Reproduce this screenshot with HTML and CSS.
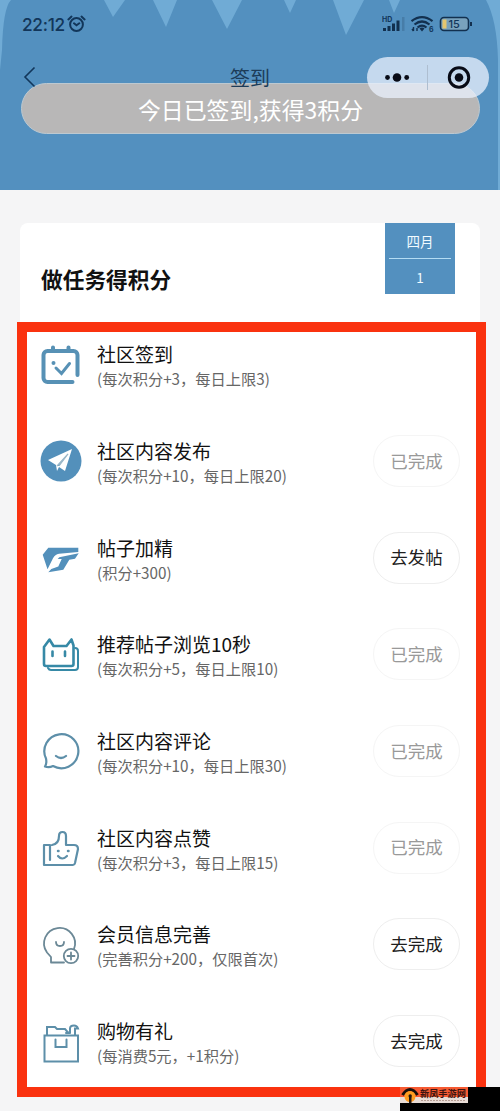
FILE: index.html
```html
<!DOCTYPE html>
<html lang="zh-CN">
<head>
<meta charset="utf-8">
<title>签到</title>
<link rel="stylesheet" href="styles.css">
</head>
<body>
<div class="page">
  <header class="hero">
    <svg class="rays" viewBox="0 0 500 190"><path d="M0 0H11Q3 8 2 50L0 70zM104 0h21l-12 17zM153 0h24l-11 27zM212 0h30l-15 29zM284 0h12l-6 13zM333 0h31l-18 35zM389 0h11l-6 13zM486 0h14v190h-2V60Q497 20 486 0z"/></svg>
    <div class="status">
      <span class="time">22:12</span>
      <svg class="alarm" width="20" height="18" viewBox="0 0 20 18"><circle cx="9.5" cy="9.5" r="6.4"/><path d="M1.4 4.4 4.5 1.6M17.6 4.4 14.5 1.6M7 8.3l2.5 2 2.8-2"/></svg>
      <svg class="signals" width="94" height="20" viewBox="0 0 94 20">
        <text x="0" y="8" class="hd">HD</text>
        <path class="fill" d="M1 14h3v3H1zM5.5 12h3v5h-3zM10 9.5h3V17h-3zM14.5 6.5h3V17h-3z"/><path class="dim" d="M20 3h2.5v14H20z"/>
        <path class="wave" d="M29.5 7.2q10.5-8 21 0M32.5 10.5q7.5-6 15 0M35.500 13.5q4.500-3.600 9 0"/><path class="fill" d="m37.500 14.500 2.500 3 2.500-3q-2.500-2-5 0z"/>
        <path class="mini" d="M31.500 13v4m0 0-1.500-2M35 17v-3"/><text x="47" y="18" class="six">6</text>
        <rect class="cell" x="58.500" y="3.500" width="28" height="13" rx="3.500"/><path class="yellow" d="M60.500 5.500h4v9h-4z"/><path class="fill" d="M88 8h2v4h-2z"/><text x="66.500" y="14.200" class="pct">15</text>
      </svg>
    </div>
    <div class="banner">今日已签到,获得3积分</div>
    <nav class="nav">
      <svg class="back" width="14" height="22" viewBox="0 0 14 22"><path d="M11.500 1.500 2 11l9.500 9.500"/></svg>
      <span class="title">签到</span>
    </nav>
    <div class="capsule">
      <svg width="122" height="41" viewBox="0 0 122 41"><circle cx="20.500" cy="20.500" r="2.400"/><circle cx="30" cy="20.500" r="4.300"/><circle cx="39.700" cy="20.500" r="2.400"/><path class="split" d="M60.500 8v25"/><circle class="ring" cx="92" cy="20.500" r="9.700"/><circle cx="92" cy="20.500" r="4.300"/></svg>
    </div>
  </header>

  <main class="card">
    <div class="card-head">
      <h1>做任务得积分</h1>
      <div class="date"><span>四月</span><span class="day">1</span></div>
    </div>
    <ul class="tasks">
      <li class="task">
        <svg class="icon checkin" viewBox="0 0 44 44"><path d="M38.500 32V12a4 4 0 0 0-4-4H8.500a4 4 0 0 0-4 4v23a4 4 0 0 0 4 4h25M14 4.500V8M29.500 4.500V8"/><path class="check" d="m17 25 5.500 5.500 8-10"/><circle cx="14.500" cy="20" r="2"/></svg>
        <div class="info"><h2>社区签到</h2><p>(每次积分+3，每日上限3)</p></div>
      </li>
      <li class="task">
        <svg class="icon solid" viewBox="0 0 44 44"><circle cx="22" cy="21" r="20.500"/><path class="white" d="m9 20 24-11-7 22-6-4-2 4-1-6z"/><path class="fold" d="m18 26 11-12-9 12"/></svg>
        <div class="info"><h2>社区内容发布</h2><p>(每次积分+10，每日上限20)</p></div>
        <button class="btn done">已完成</button>
      </li>
      <li class="task">
        <svg class="icon solid" viewBox="0 0 44 44"><path d="M3.700 17.800 9.300 10.800H39.300V15L20 16.800q-4 .5-6 4.500L8.500 32.200z"/><path d="m20.300 20.200 19.400-4-3.700 5.600-5.700 1-6 10L9.300 35.200l3-3.200 7-2.500 3.400-7.500h-4z"/></svg>
        <div class="info"><h2>帖子加精</h2><p>(积分+300)</p></div>
        <button class="btn">去发帖</button>
      </li>
      <li class="task">
        <svg class="icon cat" viewBox="0 0 44 44"><path d="M5 31V14l5.500-7.500 4 6.500h13l5-6.500 2 6v18.500q0 2-2 2H7q-2 0-2-2zM13.500 18.500v4.500M26 18.500v4.500"/><path class="behind" d="M36 15q3 0 3 3v16q0 3-3 3H12q-2 0-3-2"/></svg>
        <div class="info"><h2>推荐帖子浏览10秒</h2><p>(每次积分+5，每日上限10)</p></div>
        <button class="btn done">已完成</button>
      </li>
      <li class="task">
        <svg class="icon line" viewBox="0 0 44 44"><path d="M7 28.500A17 17 0 1 1 14 36q-4 2-8 .5 2-3 1-8zM17 26q5 4 10 0"/></svg>
        <div class="info"><h2>社区内容评论</h2><p>(每次积分+10，每日上限30)</p></div>
        <button class="btn done">已完成</button>
      </li>
      <li class="task">
        <svg class="icon line thumb" viewBox="0 0 44 44"><path d="M11 33V18H5v20h29q1.500 0 2-2l3-14q0-4-4-4h-8V9q0-4-3.500-4T20 9q0 8-7 9M19 29q4 5 9 0"/><path class="eyes" d="M19 24h.5M29 24h.5"/></svg>
        <div class="info"><h2>社区内容点赞</h2><p>(每次积分+3，每日上限15)</p></div>
        <button class="btn done">已完成</button>
      </li>
      <li class="task">
        <svg class="icon line thin" viewBox="0 0 44 44"><path d="M25 39.500H12V34L8 29.500A15.500 15.500 0 1 1 35 26M17 19q0 4 4 4t4-4"/><circle cx="32" cy="33" r="7.200"/><path d="M28.500 33h7M32 29.500v7"/></svg>
        <div class="info"><h2>会员信息完善</h2><p>(完善积分+200，仅限首次)</p></div>
        <button class="btn">去完成</button>
      </li>
      <li class="task">
        <svg class="icon line box" viewBox="0 0 44 44"><path d="M5.500 15.500H39V41.500H5.500zM16.500 19.500V27h11v-7.500M8 14.500V7h8l2 2h8l3 3.500h2V8.500q0-3 4-3 3 0 4 3h-3v6M27 13h4"/></svg>
        <div class="info"><h2>购物有礼</h2><p>(每消费5元，+1积分)</p></div>
        <button class="btn">去完成</button>
      </li>
    </ul>
  </main>
  <div class="frame"></div>
  <div class="watermark">
    <svg width="100" height="24" viewBox="0 0 100 24"><path class="strip" d="M0 0h68v16H0z"/><path class="red" d="M0 0h68v10H0z"/><path class="arc" d="M2.500 8Q10-3 17.500 8"/><circle class="sun" cx="10" cy="9.500" r="5.500"/><path class="person" d="M9 10h2.500v6H9z"/><circle class="person" cx="10.200" cy="9" r="1.700"/><text x="20" y="10">新凤手游网</text><path class="caption" d="M21 13.500h44"/></svg>
  </div>
</div>
</body>
</html>
```
FILE: styles.css
```css
* { box-sizing: border-box; }
body { margin: 0; background: #f5f5f6; font-family: "Noto Sans CJK SC", sans-serif; color: #111; }
.page { position: relative; height: 1111px; overflow: hidden; }
svg { display: block; fill: none; }

.hero { position: relative; height: 190px; padding: 14px 20px 0; background: #5390bf; }
.rays { position: absolute; inset: 0; width: 500px; height: 190px; fill: #70abd5; }
.status { position: relative; display: flex; align-items: center; height: 20px; color: #12365a; }
.time { margin-left: 2px; width: 45px; font: 500 17.300px/21px Inter, sans-serif; letter-spacing: -.3px; white-space: nowrap; }
.alarm { stroke: #12365a; stroke-width: 2; stroke-linecap: round; }
.signals { margin-left: auto; margin-right: 4px; }
.signals text { fill: #12365a; font: 700 7px Inter, sans-serif; }
.signals .pct { font-size: 11px; font-weight: 500; }
.fill { fill: #12304f; }
.dim { fill: #477da8; }
.wave { stroke: #12304f; stroke-width: 2.2; }
.mini { stroke: #12304f; stroke-width: 1.4; }
.cell { stroke: #12304f; stroke-width: 1.6; fill: #79a2bd; }
.yellow { fill: #e5c66f; }
.banner { position: relative; margin: 49px 0 0 1px; height: 51px; border: 1px solid #bdc9d1; border-radius: 26px; background: #b8b7b7; color: #fff; font-size: 22.900px; line-height: 51px; text-align: center; }
.nav { position: absolute; top: 65px; left: 0; width: 500px; height: 26px; display: flex; justify-content: center; }
.back { position: absolute; left: 23px; top: 1px; stroke: #12365a; stroke-width: 1.6; }
.title { color: #1c3c59; font-size: 20px; line-height: 26px; }
.capsule { position: absolute; left: 367px; top: 57px; width: 122px; height: 41px; border-radius: 21px; background: rgba(235, 242, 253, .75); }
.capsule svg { fill: #080b16; }
.capsule .split { stroke: #aebed0; }
.capsule .ring { fill: none; stroke: #080b16; stroke-width: 3; }

.card { margin: 33px 20px 0; height: 870px; border-radius: 8px; background: #fff; }
.card-head { display: flex; justify-content: space-between; height: 94px; padding: 0 25px 0 21px; }
h1 { margin: 40px 0 0; font-size: 21.7px; line-height: 32px; font-weight: 700; }
.date { width: 70px; height: 71px; padding: 0 4px; background: #5390bf; color: #f1fbff; font-size: 13.500px; text-align: center; }
.date span { display: block; height: 36px; line-height: 37px; border-bottom: 1.500px solid #b4dcf3; }
.date .day { border: 0; height: 35px; line-height: 36px; }
.tasks { list-style: none; margin: 0; padding: 0 20px 0 19px; }
.task { display: flex; align-items: center; height: 96.7px; }
.icon { width: 44px; height: 44px; flex: none; }
.info { margin-left: 14px; padding-top: 2px; flex: 1; white-space: nowrap; }
h2 { margin: 0; font-size: 19px; line-height: 25px; font-weight: 400; }
.info p { margin: 0; color: #666; font-size: 15.250px; line-height: 25px; }
.btn { width: 87px; height: 52px; margin-bottom: 2px; padding: 0 0 2px; border: 1px solid #eee; border-radius: 26px; background: #fff; color: #202020; font: 17.500px "Noto Sans CJK SC", sans-serif; }
.done { color: #999; border-color: #f5f5f5; }

.checkin { stroke: #5791b5; stroke-width: 4; stroke-linecap: round; }
.checkin circle { fill: #5791b5; stroke: none; }
.check { stroke-width: 3; }
.solid { fill: #5390bb; }
.white { fill: #fff; }
.fold { stroke: #9bb8c9; stroke-width: 1.200; }
.cat { stroke: #3689a6; stroke-width: 2.600; stroke-linejoin: round; stroke-linecap: round; }
.behind { stroke-width: 2; }
.line { stroke: #5d8fa9; stroke-width: 2.200; stroke-linejoin: round; stroke-linecap: round; }
.thin { stroke: #6b8896; stroke-width: 1.800; }
.eyes { stroke-width: 2.500; }
.box { stroke-width: 2; stroke-linejoin: miter; }

.frame { position: absolute; left: 17px; top: 322px; width: 469px; height: 775px; border: 10px solid #fa320f; }
.watermark { position: absolute; right: 0; bottom: 0; width: 100px; height: 24px; background: #000; }
.strip { fill: #e9ddd7; }
.red { fill: #f65a32; }
.arc { stroke: #18100c; stroke-width: 3; }
.sun { fill: #ff9d20; }
.person { fill: #251914; }
.watermark text { fill: #3b1410; font: 700 9.200px "Noto Sans CJK SC", sans-serif; }
.caption { stroke: #b59d94; stroke-dasharray: 2 1; }
```
